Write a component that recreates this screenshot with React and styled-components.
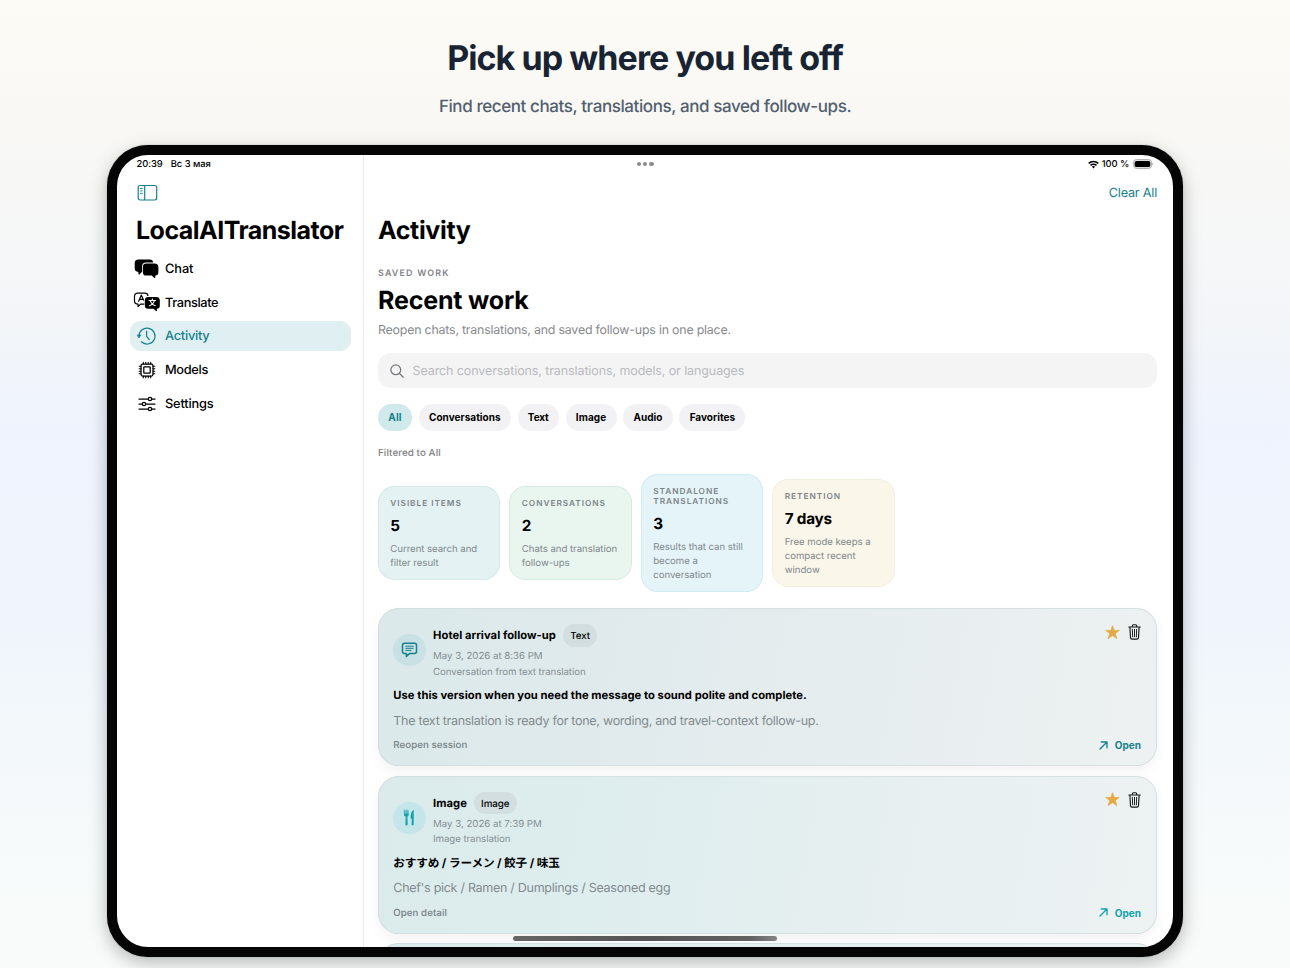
import React from "react";
import styled, { createGlobalStyle, css } from "styled-components";

const teal = "#16818c";
const aqua = "#12a2b0";
const gray = "#88898d";

const GlobalStyle = createGlobalStyle`
  * { box-sizing: border-box; }
  body {
    margin: 0;
    overflow: hidden;
    font-family: Inter, "Noto Sans CJK JP", sans-serif;
    text-rendering: geometricPrecision;
    color: #000;
  }
  h1, h2, h3, p { margin: 0; }
  button { font: inherit; border: 0; background: none; padding: 0; color: inherit; }
  svg { display: block; flex: none; }
`;

const Page = styled.div`
  width: 1290px;
  height: 968px;
  overflow: hidden;
  display: flex;
  flex-direction: column;
  align-items: center;
  background: linear-gradient(
    #fcfbf6 0, #f9f8f4 110px, #f6f7f7 230px, #f2f5f9 340px, #eff3fd 430px,
    #eff4fd 590px, #f2f7fb 700px, #f6fafa 850px, #f8fbf9 968px
  );
`;

const Headline = styled.h1`
  margin-top: 37px;
  height: 43px;
  font-size: 34px;
  line-height: 44px;
  font-weight: 700;
  letter-spacing: -0.93px;
  color: #182433;
`;

const Tagline = styled.p`
  margin-top: 16px;
  height: 49px;
  font-size: 17px;
  line-height: 23px;
  font-weight: 500;
  letter-spacing: -0.41px;
  color: #526070;
`;

const Tablet = styled.div`
  flex: none;
  width: 1076px;
  height: 812px;
  padding: 10px;
  border-radius: 41px;
  background: #050505;
  box-shadow: 0 6px 18px rgba(0, 0, 0, 0.26), 0 0 1px rgba(0, 0, 0, 0.5);
`;

const Screen = styled.div`
  position: relative;
  display: flex;
  width: 1056px;
  height: 792px;
  overflow: hidden;
  border-radius: 31px;
  background: #fff;
`;

const Sidebar = styled.aside`
  flex: none;
  width: 246.5px;
  padding: 0 12px 0 13px;
  border-right: 1px solid #ececee;
`;

const Main = styled.main`
  flex: 1;
  min-width: 0;
  padding: 0 16px 0 14.5px;
`;

const StatusBar = styled.div`
  display: flex;
  align-items: center;
  gap: ${(p) => p.$gap || 0}px;
  height: 18px;
  padding: 0 ${(p) => p.$end || 0}px 0 ${(p) => p.$start || 0}px;
  font-size: 9.4px;
  line-height: 12px;
  font-weight: 500;
  letter-spacing: -0.05px;
  span { padding-top: 2px; }
`;

const Dots = styled.div`
  display: flex;
  gap: 2px;
  flex: 1;
  i { width: 4.2px; height: 4.2px; border-radius: 50%; background: #8b8b8d; }
`;

const Toolbar = styled.div`
  display: flex;
  align-items: center;
  justify-content: ${(p) => (p.$end ? "flex-end" : "flex-start")};
  height: 39.5px;
  padding: ${(p) => (p.$end ? "2px 0 0 0" : "0 0 0 7px")};
  font-size: 12.7px;
  line-height: 19px;
  letter-spacing: -0.22px;
  color: ${teal};
`;

const Title = styled.h2`
  height: ${(p) => p.$h || 36}px;
  padding-left: ${(p) => p.$inset || 0}px;
  font-size: 25px;
  line-height: ${(p) => (p.$h ? p.$h : 37)}px;
  font-weight: 700;
  white-space: nowrap;
  letter-spacing: ${(p) => p.$track}px;
`;

const NavList = styled.nav`
  display: flex;
  flex-direction: column;
  gap: 3.8px;
  padding-top: 5px;
`;

const NavItem = styled.a`
  display: flex;
  align-items: center;
  height: 30px;
  border-radius: 11px;
  font-size: 12.8px;
  line-height: 18px;
  font-weight: 500;
  letter-spacing: ${(p) => p.$track}px;
  ${(p) => p.$active && css`background: #e0eff2; color: ${teal};`}
`;

const NavLabel = styled.span`
  padding-top: 2.8px;
`;

const NavIcon = styled.span`
  display: flex;
  justify-content: center;
  width: 33px;
  margin-right: 2px;
`;

const Eyebrow = styled.p`
  margin: 18px 0 5.5px;
  font-size: 8.9px;
  line-height: 14px;
  font-weight: 600;
  letter-spacing: 1.2px;
  color: #828387;
`;

const Subtitle = styled.p`
  margin: 4.8px 0 14.2px;
  font-size: 12.4px;
  line-height: 18px;
  letter-spacing: -0.21px;
  color: ${gray};
`;

const SearchField = styled.div`
  display: flex;
  align-items: center;
  gap: 8.5px;
  height: 35px;
  padding: 1.5px 0 0 12px;
  border-radius: 13px;
  background: #f4f4f5;
  font-size: 12.5px;
  line-height: 19px;
  letter-spacing: -0.1px;
  color: #b9babd;
`;

const Chips = styled.div`
  display: flex;
  gap: 6.6px;
  margin-top: 15.8px;
`;

const Chip = styled.button`
  height: 27px;
  padding: 0 10.3px;
  border-radius: 14px;
  font-size: 10px;
  line-height: 26px;
  font-weight: 650;
  letter-spacing: ${(p) => p.$track || 0}px;
  background: ${(p) => (p.$active ? "#d0e9eb" : "#f2f2f4")};
  color: ${(p) => (p.$active ? teal : "#000")};
`;

const FilterNote = styled.p`
  margin-top: 16px;
  font-size: 9.8px;
  line-height: 14px;
  font-weight: 500;
  letter-spacing: 0.08px;
  color: #7f8084;
`;

const Stats = styled.div`
  display: flex;
  align-items: center;
  gap: 9.2px;
  height: 118px;
  margin-top: 13.4px;
`;

const StatCard = styled.section`
  width: 122.3px;
  padding: 13.3px 8px 9.7px 12.3px;
  border-radius: 17px;
  background: ${(p) => p.$bg};
  box-shadow: inset 0 0 0 0.8px ${(p) => p.$edge};
`;

const StatLabel = styled.p`
  font-size: 8.3px;
  line-height: 10px;
  font-weight: 600;
  letter-spacing: 0.95px;
  color: #7c8488;
`;

const StatValue = styled.p`
  margin: 7.3px 0 7.8px;
  font-size: 15.3px;
  line-height: 18px;
  font-weight: 700;
  letter-spacing: -0.25px;
`;

const StatText = styled.p`
  font-size: 9.6px;
  line-height: 14px;
  letter-spacing: -0.03px;
  white-space: pre-line;
  color: #80888b;
`;

const Feed = styled.div`
  display: flex;
  flex-direction: column;
  gap: 9.6px;
  margin-top: 16px;
`;

const FeedCard = styled.article`
  flex: none;
  height: 158px;
  padding: 15.9px 16.2px 0 15.3px;
  border-radius: 21px;
  background: ${(p) => p.$bg};
  box-shadow: inset 0 0 0 0.8px #cfdcde, 0 5px 12px rgba(0, 0, 0, 0.055);
`;

const CardHead = styled.header`
  display: flex;
  height: 55px;
`;

const Avatar = styled.div`
  display: flex;
  align-items: center;
  justify-content: center;
  width: 32.4px;
  height: 32.4px;
  margin: 10px 7.4px 0 0;
  border-radius: 50%;
  background: ${(p) => p.$bg};
`;

const CardInfo = styled.div`
  flex: 1;
`;

const CardTitle = styled.div`
  display: flex;
  align-items: center;
  gap: 6.8px;
  height: 22.5px;
  margin-bottom: 2.8px;
  h3 { font-size: 11.2px; line-height: 16px; font-weight: 650; letter-spacing: 0.05px; }
`;

const Badge = styled.span`
  height: 22.5px;
  padding: 0 7.4px;
  border-radius: 12px;
  background: #d3dee0;
  font-size: 9.8px;
  line-height: 25px;
  font-weight: 500;
  letter-spacing: -0.08px;
`;

const Meta = styled.p`
  font-size: 9.7px;
  line-height: 15.4px;
  letter-spacing: ${(p) => p.$track}px;
  color: #859093;
`;

const CardActions = styled.div`
  display: flex;
  align-items: center;
  gap: 8px;
  height: 16px;
`;

const Lead = styled.p`
  margin-top: 8.2px;
  font-size: ${(p) => (p.$cjk ? 11.6 : 11.2)}px;
  line-height: 16px;
  height: 16px;
  font-weight: ${(p) => (p.$cjk ? 700 : 650)};
  letter-spacing: ${(p) => (p.$cjk ? -0.11 : 0.045)}px;
`;

const Detail = styled.p`
  margin-top: 9.6px;
  font-size: 12.5px;
  line-height: 18px;
  letter-spacing: -0.28px;
  color: #818b8e;
`;

const CardFoot = styled.footer`
  display: flex;
  align-items: center;
  justify-content: space-between;
  height: 14px;
  margin-top: 7.2px;
  font-size: 9.7px;
  line-height: 14px;
  font-weight: 550;
  letter-spacing: 0.06px;
  color: #758084;
`;

const FootLabel = styled.span`
  padding-top: 2.4px;
`;

const OpenLink = styled.button`
  display: flex;
  align-items: center;
  gap: 6.5px;
  font-size: 10px;
  font-weight: 650;
  letter-spacing: -0.05px;
  color: ${(p) => p.$color};
`;

const HomeIndicator = styled.div`
  position: absolute;
  left: 396px;
  bottom: 6px;
  width: 264px;
  height: 4.6px;
  border-radius: 3px;
  background: linear-gradient(90deg, #666, #545454 50%, #626262 90%, #858585);
`;

const ChatIcon = () => (
  <svg width="26" height="20" viewBox="0 0 26 20">
    <path d="M4.5 .5h11.2c2 0 3.3 1.1 3.5 3H12c-2.4 0-4 1.6-4 4v5.3L5.4 15.4c-.4.4-1 .2-1-.4v-2.1C2 12.8.7 11.6.7 9.3V4.2C.7 1.8 2 .5 4.5 .5Z" />
    <path d="M12.3 4.5h8.2c2.5 0 3.9 1.3 3.9 3.7v4.7c0 2.3-1.1 3.5-3.1 3.6v2c0 .6-.6.8-1 .4l-2.6-2.3h-5.4c-2.3 0-3.5-1.3-3.5-3.7V8.2c0-2.4 1.2-3.7 3.5-3.7Z" />
  </svg>
);

const TranslateIcon = () => (
  <svg width="27" height="20" viewBox="-.4 0 27 20">
    <path fill="none" stroke="#000" strokeWidth="1.2" strokeLinejoin="round" d="M10.8 12.1H7.2l-2.6 2.5v-2.6C2.2 11.9 1.1 10.9 1.1 8.9V4.2c0-2 1.1-3 3.2-3h7c2.1 0 3.2 1 3.2 2.8" />
    <path fill="none" stroke="#000" strokeWidth="1.2" strokeLinecap="round" strokeLinejoin="round" d="m5.3 9.3 2.6-6.2 2.2 5M6.2 7.3h3.2" />
    <path d="M14.8 4.9h8.1c2.2 0 3.5 1.2 3.5 3.3v5.2c0 2.1-1 3.2-2.9 3.3v2c0 .5-.5.7-.9.3l-2.5-2.3h-5.3c-2.2 0-3.4-1.1-3.4-3.3V8.2c0-2.1 1.2-3.3 3.4-3.3Z" />
    <path fill="none" stroke="#fff" strokeWidth="1.1" strokeLinecap="round" d="M18.9 6.9v1.3M15.7 8.5h6.5M16.9 8.7c.7 2.5 2.4 4.2 4.9 5M21 8.7c-.7 2.5-2.4 4.2-4.9 5" />
  </svg>
);

const HistoryIcon = () => (
  <svg width="20" height="20" viewBox="1 0 20 20" fill="none" stroke={teal} strokeWidth="1.25" strokeLinecap="round" strokeLinejoin="round">
    <path d="M3 10.2A8 8 0 1 1 5.4 15.8" />
    <path d="M10.6 5.2v5.2l2.6 3.1" />
    <path fill={teal} strokeWidth=".8" d="M1.500 9.100h3.300L3.100 11.600Z" />
  </svg>
);

const ChipIcon = () => (
  <svg width="18" height="18" viewBox="0 0 18 18" fill="none" stroke="#000" strokeWidth="1.25" strokeLinecap="round">
    <rect x="3" y="3" width="12" height="12" rx="1.8" />
    <rect x="5.8" y="5.8" width="6.4" height="6.4" rx=".5" />
    <path strokeWidth="1.1" d="M5.3 1.2v1.8M7.75 1.2v1.8M10.25 1.2v1.8M12.7 1.2v1.8M5.3 15v1.8M7.75 15v1.8M10.25 15v1.8M12.7 15v1.8M1.2 5.3h1.8M1.2 7.75h1.8M1.2 10.25h1.8M1.2 12.7h1.8M15 5.3h1.8M15 7.75h1.8M15 10.25h1.8M15 12.7h1.8" />
  </svg>
);

const SlidersIcon = () => (
  <svg width="18" height="16" viewBox="0 0 18 16" fill="none" stroke="#000" strokeWidth="1.25" strokeLinecap="round">
    <path d="M1 3h9.2M13.8 3H17M1 8h3.2M7.8 8H17M1 13h9.2M13.8 13H17" />
    <circle cx="12" cy="3" r="1.7" />
    <circle cx="6" cy="8" r="1.7" />
    <circle cx="12" cy="13" r="1.7" />
  </svg>
);

const SidebarIcon = () => (
  <svg width="21" height="17" viewBox="0 0 21 17" fill="none" stroke={teal} strokeWidth="1.2">
    <rect x="1.2" y="1.5" width="18.5" height="14.5" rx="1.9" />
    <path d="M7.7 1.5v14.5" />
    <path strokeWidth=".9" d="M3 4.5h2.7M3 6.9h2.7M3 9.3h2.7" />
  </svg>
);

const WifiIcon = () => (
  <svg width="11" height="9" viewBox="0 0 11 9" fill="none" stroke="#000" strokeWidth="1.5">
    <path d="M.7 3.4c2.7-2.7 6.9-2.7 9.6 0M2.5 5.4c1.7-1.7 4.3-1.7 6 0" />
    <path fill="#000" stroke="none" d="M3.8 6.6c1-.9 2.4-.9 3.4 0L5.5 8.5Z" />
  </svg>
);

const BatteryIcon = () => (
  <svg width="21" height="10" viewBox="0 0 21 10">
    <rect x=".5" y=".5" width="18" height="9" rx="3" fill="#ddd" stroke="#b4b4b4" />
    <rect x="1.7" y="1.9" width="15.6" height="6.2" rx="1.9" />
    <path fill="#aaa" d="M19.3 3.5c1.2.4 1.2 2.6 0 3Z" />
  </svg>
);

const SearchIcon = () => (
  <svg width="14" height="14" viewBox="0 0 14 14" fill="none" stroke="#77787c" strokeWidth="1.25" strokeLinecap="round">
    <circle cx="5.8" cy="5.8" r="4.9" />
    <path d="m9.5 9.5 3.7 3.7" />
  </svg>
);

const BubbleIcon = () => (
  <svg width="17" height="16" viewBox="-.5 0 17 16" fill="none" stroke={teal} strokeWidth="1.5" strokeLinejoin="round" strokeLinecap="round">
    <path d="M3 1.2h10c1.3 0 2 .7 2 2v6.2c0 1.3-.7 2-2 2H8.2l-3.3 3v-3H3c-1.3 0-2-.7-2-2V3.2c0-1.3.7-2 2-2Z" />
    <path strokeWidth="1" d="M4.3 4.2h7.4M4.3 6.3h7.4M4.3 8.4h5.2" />
  </svg>
);

const ForkKnifeIcon = () => (
  <svg width="12" height="17" viewBox="0 0 12 17" fill={aqua}>
    <path d="M.8.7h.8l.2 4h.6l.2-4h.9l.2 4h.6l.2-4h.8l.4 4.5c.1 1.2-.4 2-1.3 2.4l.3 7.6c0 1.6-2.4 1.6-2.3 0l.3-7.6C1.4 7.2.8 6.4.9 5.2Z" />
    <path d="M10.7.8v14.5c0 1.5-2.1 1.5-2.1 0l.2-5.1c-.9-.5-1.3-1.3-1.2-2.5C7.8 4.2 9 1.7 10.7.8Z" />
  </svg>
);

const StarIcon = () => (
  <svg width="15" height="15" viewBox="0 0 15 15">
    <path fill="#e3aa42" stroke="#e3aa42" strokeWidth=".7" strokeLinejoin="round" d="m7.5.7 1.7 4.7h5.1l-4 3.1 1.5 5.1-4.3-3-4.3 3 1.5-5.1-4-3.1h5.1Z" />
  </svg>
);

const TrashIcon = () => (
  <svg width="13" height="16" viewBox="0 0 13 16" fill="none" stroke="#161819" strokeWidth="1.15" strokeLinecap="round" strokeLinejoin="round">
    <path d="M.8 3h11.4M4.3 2.8V1.9c0-.8.4-1.2 1.2-1.2h2c.8 0 1.2.4 1.2 1.2v.9M1.9 3.2l.6 10.4c.1 1 .6 1.5 1.5 1.5h5c.9 0 1.4-.5 1.5-1.5l.6-10.4" />
    <path strokeWidth=".95" d="m4.4 5.3.2 7.5M6.5 5.3v7.5M8.6 5.3l-.2 7.5" />
  </svg>
);

const ArrowIcon = () => (
  <svg width="9" height="9" viewBox="0 0 9 9" fill="none" stroke="currentColor" strokeWidth="1.35" strokeLinecap="round" strokeLinejoin="round">
    <path d="M1 8 8 1M2.3 1H8v5.7" />
  </svg>
);

const nav = [
  { label: "Chat", Icon: ChatIcon, track: -0.1 },
  { label: "Translate", Icon: TranslateIcon, track: -0.38 },
  { label: "Activity", Icon: HistoryIcon, track: -0.26 },
  { label: "Models", Icon: ChipIcon, track: -0.32 },
  { label: "Settings", Icon: SlidersIcon, track: -0.18 },
];

const chips = [["All", 0.2], ["Conversations", 0.04], ["Text", -0.12], ["Image", 0.09], ["Audio", 0.02], ["Favorites", 0.03]];

const stats = [
  { label: "VISIBLE ITEMS", value: "5", text: "Current search and\nfilter result", bg: "#e4f2f4", edge: "#cfe6e8" },
  { label: "CONVERSATIONS", value: "2", text: "Chats and translation\nfollow-ups", bg: "#e9f6ef", edge: "#d0e9df" },
  { label: "STANDALONE TRANSLATIONS", value: "3", text: "Results that can still\nbecome a\nconversation", bg: "#e4f4f9", edge: "#cae8ef" },
  { label: "RETENTION", value: "7 days", text: "Free mode keeps a\ncompact recent\nwindow", bg: "#fbf6ea", edge: "#f3ecdc" },
];

const entries = [
  {
    title: "Hotel arrival follow-up", badge: "Text", date: "May 3, 2026 at 8:36 PM", source: "Conversation from text translation",
    lead: "Use this version when you need the message to sound polite and complete.",
    detail: "The text translation is ready for tone, wording, and travel-context follow-up.",
    foot: "Reopen session", Icon: BubbleIcon, color: teal, circle: "#c9e0e4",
    bg: "linear-gradient(100deg, #dbe9ea 0%, #e0eaec 30%, #e6edef 60%, #edf1f1 100%)",
  },
  {
    title: "Image", badge: "Image", date: "May 3, 2026 at 7:39 PM", source: "Image translation",
    lead: "おすすめ / ラーメン / 餃子 / 味玉", cjk: true,
    detail: "Chef's pick / Ramen / Dumplings / Seasoned egg",
    foot: "Open detail", Icon: ForkKnifeIcon, color: aqua, circle: "#c4e5e9",
    bg: "linear-gradient(100deg, #dbebec 0%, #deedee 30%, #e6eff0 62%, #edf2f2 100%)",
  },
];

function Entry({ item }) {
  const { Icon } = item;
  return (
    <FeedCard $bg={item.bg}>
      <CardHead>
        <Avatar $bg={item.circle}><Icon /></Avatar>
        <CardInfo>
          <CardTitle><h3>{item.title}</h3><Badge>{item.badge}</Badge></CardTitle>
          <Meta $track={-0.02}>{item.date}</Meta>
          <Meta $track={-0.08}>{item.source}</Meta>
        </CardInfo>
        <CardActions><StarIcon /><TrashIcon /></CardActions>
      </CardHead>
      <Lead $cjk={item.cjk}>{item.lead}</Lead>
      <Detail>{item.detail}</Detail>
      <CardFoot>
        <FootLabel>{item.foot}</FootLabel>
        <OpenLink $color={item.color}><ArrowIcon />Open</OpenLink>
      </CardFoot>
    </FeedCard>
  );
}

export default function App() {
  return (
    <>
      <GlobalStyle />
      <Page>
        <Headline>Pick up where you left off</Headline>
        <Tagline>Find recent chats, translations, and saved follow-ups.</Tagline>
        <Tablet>
          <Screen>
            <Sidebar>
              <StatusBar $start={6.5} $gap={8}><span>20:39</span><span>Вс 3 мая</span></StatusBar>
              <Toolbar><SidebarIcon /></Toolbar>
              <Title $inset={6} $track={-0.52}>LocalAITranslator</Title>
              <NavList>
                {nav.map(({ label, Icon, track }) => (
                  <NavItem key={label} $active={label === "Activity"} $track={track}>
                    <NavIcon><Icon /></NavIcon><NavLabel>{label}</NavLabel>
                  </NavItem>
                ))}
              </NavList>
            </Sidebar>
            <Main>
              <StatusBar $start={259} $end={3.5} $gap={3.2}>
                <Dots><i /><i /><i /></Dots>
                <WifiIcon /><span>100 %</span><BatteryIcon />
              </StatusBar>
              <Toolbar $end>Clear All</Toolbar>
              <Title $track={-0.34}>Activity</Title>
              <Eyebrow>SAVED WORK</Eyebrow>
              <Title $h={30} $track={-0.17}>Recent work</Title>
              <Subtitle>Reopen chats, translations, and saved follow-ups in one place.</Subtitle>
              <SearchField><SearchIcon />Search conversations, translations, models, or languages</SearchField>
              <Chips>
                {chips.map(([label, track], i) => (
                  <Chip key={label} $active={i === 0} $track={track}>{label}</Chip>
                ))}
              </Chips>
              <FilterNote>Filtered to All</FilterNote>
              <Stats>
                {stats.map((s) => (
                  <StatCard key={s.label} $bg={s.bg} $edge={s.edge}>
                    <StatLabel>{s.label}</StatLabel>
                    <StatValue>{s.value}</StatValue>
                    <StatText>{s.text}</StatText>
                  </StatCard>
                ))}
              </Stats>
              <Feed>
                {entries.map((item) => <Entry key={item.title} item={item} />)}
                <FeedCard $bg="linear-gradient(100deg, #dcebec, #edf2f2)" />
              </Feed>
            </Main>
            <HomeIndicator />
          </Screen>
        </Tablet>
      </Page>
    </>
  );
}
